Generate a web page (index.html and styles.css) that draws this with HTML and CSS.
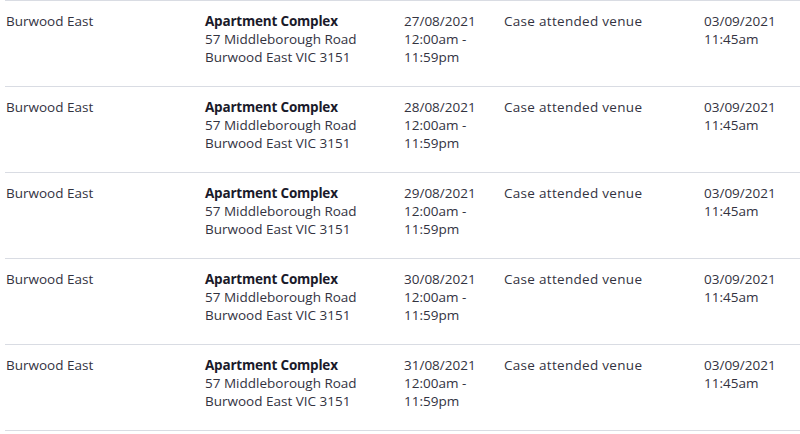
FILE: index.html
```html
<!DOCTYPE html>
<html lang="en">
<head>
<meta charset="utf-8">
<title>Exposure sites</title>
<link rel="stylesheet" href="styles.css">
</head>
<body>
<div class="sites">
  <div class="row">
    <div class="cell">Burwood East</div>
    <div class="cell"><strong>Apartment Complex</strong><br>57 Middleborough Road<br>Burwood East VIC 3151</div>
    <div class="cell">27/08/2021<br>12:00am -<br>11:59pm</div>
    <div class="cell wide">Case attended venue</div>
    <div class="cell">03/09/2021<br>11:45am</div>
  </div>
  <div class="row">
    <div class="cell">Burwood East</div>
    <div class="cell"><strong>Apartment Complex</strong><br>57 Middleborough Road<br>Burwood East VIC 3151</div>
    <div class="cell">28/08/2021<br>12:00am -<br>11:59pm</div>
    <div class="cell wide">Case attended venue</div>
    <div class="cell">03/09/2021<br>11:45am</div>
  </div>
  <div class="row">
    <div class="cell">Burwood East</div>
    <div class="cell"><strong>Apartment Complex</strong><br>57 Middleborough Road<br>Burwood East VIC 3151</div>
    <div class="cell">29/08/2021<br>12:00am -<br>11:59pm</div>
    <div class="cell wide">Case attended venue</div>
    <div class="cell">03/09/2021<br>11:45am</div>
  </div>
  <div class="row">
    <div class="cell">Burwood East</div>
    <div class="cell"><strong>Apartment Complex</strong><br>57 Middleborough Road<br>Burwood East VIC 3151</div>
    <div class="cell">30/08/2021<br>12:00am -<br>11:59pm</div>
    <div class="cell wide">Case attended venue</div>
    <div class="cell">03/09/2021<br>11:45am</div>
  </div>
  <div class="row">
    <div class="cell">Burwood East</div>
    <div class="cell"><strong>Apartment Complex</strong><br>57 Middleborough Road<br>Burwood East VIC 3151</div>
    <div class="cell">31/08/2021<br>12:00am -<br>11:59pm</div>
    <div class="cell wide">Case attended venue</div>
    <div class="cell">03/09/2021<br>11:45am</div>
  </div>
</div>
</body>
</html>
```
FILE: styles.css
```css
html, body {
  margin: 0;
  padding: 0;
  background: #ffffff;
  overflow: hidden;
}
body {
  font-family: "Open Sans", "Liberation Sans", sans-serif;
  font-size: 13.5px;
  line-height: 18px;
  color: #33333f;
}
.sites {
  margin-left: 5px;
  border-bottom: 1px solid #d9dce3;
}
.row {
  display: grid;
  grid-template-columns: 199px 199px 100px 200px 97px;
  border-top: 1px solid #d9dce3;
  padding: 11px 0 20px;
  height: 54px;
}
.cell {
  padding-left: 1px;
  white-space: nowrap;
}
.cell strong {
  font-weight: 700;
  color: #1a1a2a;
  letter-spacing: -0.2px;
}
.wide {
  letter-spacing: 0.3px;
}
```
